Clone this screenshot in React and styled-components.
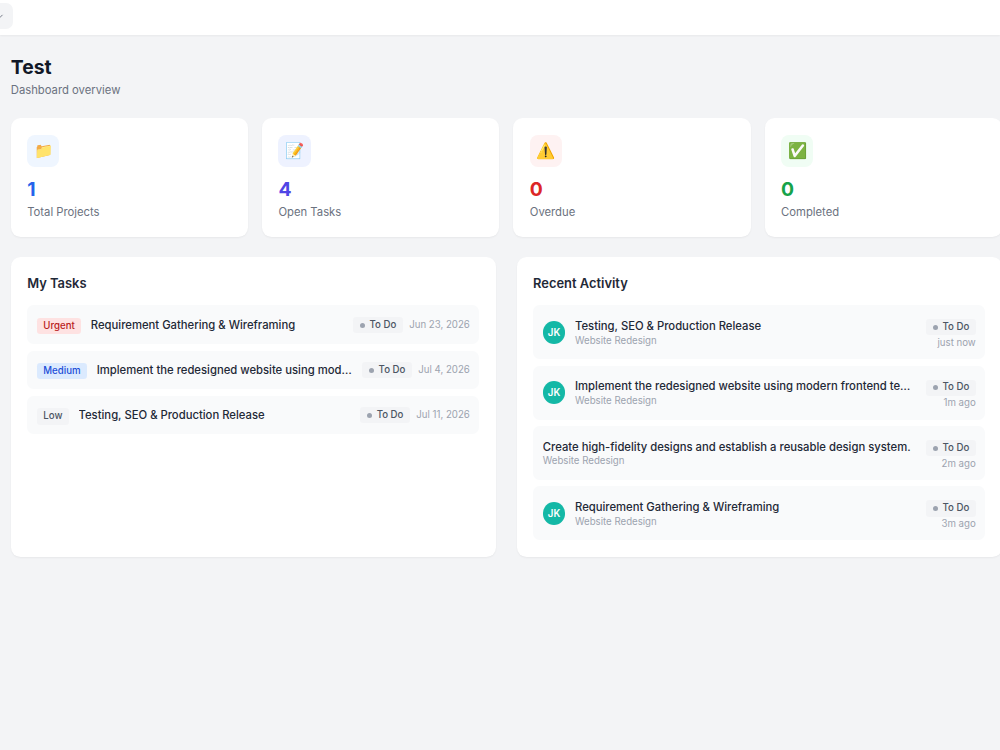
import React from "react"
import styled, { createGlobalStyle } from "styled-components"
import { ChevronDown } from "lucide-react"

const GlobalStyle = createGlobalStyle`
  *, *::before, *::after {
    box-sizing: border-box;
  }
  html {
    font-size: 12.9px;
  }
  body {
    margin: 0;
    height: 100vh;
    overflow: hidden;
    background: #f3f4f6;
    color: #1f2937;
    font-family: Inter, "Noto Sans", sans-serif;
  }
  h1, h2, p {
    margin: 0;
  }
`

const TopBar = styled.header`
  display: flex;
  align-items: flex-start;
  height: 35px;
  padding-top: 3px;
  background: #fff;
  box-shadow: 0 1px 2px rgba(0, 0, 0, 0.05);
`

const MenuButton = styled.button`
  display: flex;
  align-items: center;
  justify-content: flex-end;
  width: 40px;
  height: 26px;
  margin-left: -27px;
  padding: 0 8px 0 0;
  border: none;
  border-radius: 7px;
  background: #f3f4f6;
  color: #6b7280;
`

const Page = styled.main`
  width: 991px;
  margin-left: 10.8px;
  padding-top: 20.6px;
`

const PageTitle = styled.h1`
  color: #111827;
  font-size: 1.5rem;
  font-weight: 700;
  line-height: 1.8rem;
`

const PageSubtitle = styled.p`
  margin-top: 0.25rem;
  color: #6b7280;
  font-size: 0.875rem;
  line-height: 1.3rem;
`

const StatGrid = styled.section`
  display: grid;
  grid-template-columns: repeat(4, 1fr);
  gap: 1.1rem;
  margin: 1.51rem 0 1.6rem;
`

const Card = styled.div`
  min-width: 0;
  padding: 1.27rem;
  border-radius: 0.75rem;
  background: #fff;
  box-shadow: 0 1px 2px rgba(0, 0, 0, 0.05);
`

const StatIcon = styled.div`
  display: flex;
  align-items: center;
  justify-content: center;
  width: 2.5rem;
  height: 2.5rem;
  margin-bottom: 0.83rem;
  border-radius: 0.625rem;
  background: ${props => props.$background};
  font-size: 1.2rem;
  line-height: 1;
`

const StatValue = styled.p`
  color: ${props => props.$color};
  font-size: 1.5rem;
  font-weight: 700;
  line-height: 1.8rem;
`

const StatLabel = styled.p`
  margin-top: 0.25rem;
  margin-bottom: -0.05rem;
  color: #6b7280;
  font-size: 0.875rem;
  line-height: 1.3rem;
`

const PanelGrid = styled.section`
  display: grid;
  grid-template-columns: 1fr 1fr;
  gap: 1.62rem;
`

const PanelTitle = styled.h2`
  margin-bottom: 0.89rem;
  font-size: 1rem;
  font-weight: 600;
  line-height: 1.58rem;
`

const List = styled.div`
  display: flex;
  flex-direction: column;
  gap: 0.5rem;
`

const Row = styled.div`
  display: flex;
  align-items: center;
  gap: 0.75rem;
  height: ${props => (props.$tall ? "4.18rem" : "3rem")};
  padding: 0 0.75rem;
  border-radius: 0.5rem;
  background: #f9fafb;
`

const priorities = {
  Urgent: { background: "#fee2e2", color: "#b91c1c" },
  Medium: { background: "#dbeafe", color: "#1d4ed8" },
  Low: { background: "#f3f4f6", color: "#4b5563" },
}

const PriorityTag = styled.span`
  flex-shrink: 0;
  margin-top: 3px;
  padding: 0.125rem 0.5rem;
  border-radius: 0.25rem;
  background: ${props => priorities[props.$level].background};
  color: ${props => priorities[props.$level].color};
  font-size: 0.75rem;
  font-weight: 500;
  line-height: 1rem;
`

const ItemTitle = styled.p`
  overflow: hidden;
  font-size: 0.875rem;
  font-weight: 500;
  line-height: 1.3rem;
  text-overflow: ellipsis;
  white-space: nowrap;
`

const TaskTitle = styled(ItemTitle)`
  flex: 1;
  padding-top: 0.5px;
`

const TaskMeta = styled.div`
  display: flex;
  flex-shrink: 0;
  align-items: center;
  gap: 0.5rem;
  padding-top: 0.7px;
`

const Badge = styled.span`
  display: inline-flex;
  align-items: center;
  gap: 0.375rem;
  padding: 0.125rem 0.5rem;
  border-radius: 0.25rem;
  background: #f3f4f6;
  color: #4b5563;
  font-size: 0.75rem;
  font-weight: 500;
  line-height: 1rem;
`

const Dot = styled.span`
  width: 5px;
  height: 5px;
  border-radius: 50%;
  background: #9ca3af;
`

const Muted = styled.p`
  color: #9ca3af;
  font-size: 0.75rem;
  line-height: 1rem;
`

const Avatar = styled.div`
  display: flex;
  flex-shrink: 0;
  align-items: center;
  justify-content: center;
  width: 1.75rem;
  height: 1.75rem;
  border-radius: 50%;
  background: #14b8a6;
  color: #fff;
  font-size: 0.75rem;
  font-weight: 600;
`

const ActivityText = styled.div`
  flex: 1;
  min-width: 0;
  padding-top: 1px;
`

const ActivityMeta = styled.div`
  display: flex;
  flex-direction: column;
  flex-shrink: 0;
  align-items: flex-end;
  gap: 1.5px;
  margin-left: 3px;
  padding-top: 4.5px;
`

const stats = [
  { icon: "📁", value: 1, label: "Total Projects", color: "#2563eb", background: "#eff6ff" },
  { icon: "📝", value: 4, label: "Open Tasks", color: "#4f46e5", background: "#eef2ff" },
  { icon: "⚠️", value: 0, label: "Overdue", color: "#dc2626", background: "#fef2f2" },
  { icon: "✅", value: 0, label: "Completed", color: "#16a34a", background: "#f0fdf4" },
]

const tasks = [
  { priority: "Urgent", title: "Requirement Gathering & Wireframing", due: "Jun 23, 2026" },
  {
    priority: "Medium",
    title: "Implement the redesigned website using modern frontend technologies.",
    due: "Jul 4, 2026",
  },
  { priority: "Low", title: "Testing, SEO & Production Release", due: "Jul 11, 2026" },
]

const activity = [
  { user: "JK", title: "Testing, SEO & Production Release", time: "just now" },
  {
    user: "JK",
    title: "Implement the redesigned website using modern frontend technologies.",
    time: "1m ago",
  },
  {
    title: "Create high-fidelity designs and establish a reusable design system.",
    time: "2m ago",
  },
  { user: "JK", title: "Requirement Gathering & Wireframing", time: "3m ago" },
]

const StatusBadge = () => (
  <Badge>
    <Dot />
    To Do
  </Badge>
)

const StatCard = ({ icon, value, label, color, background }) => (
  <Card>
    <StatIcon $background={background}>{icon}</StatIcon>
    <StatValue $color={color}>{value}</StatValue>
    <StatLabel>{label}</StatLabel>
  </Card>
)

const TaskRow = ({ priority, title, due }) => (
  <Row>
    <PriorityTag $level={priority}>{priority}</PriorityTag>
    <TaskTitle>{title}</TaskTitle>
    <TaskMeta>
      <StatusBadge />
      <Muted>{due}</Muted>
    </TaskMeta>
  </Row>
)

const ActivityRow = ({ user, title, time }) => (
  <Row $tall>
    {user && <Avatar>{user}</Avatar>}
    <ActivityText>
      <ItemTitle>{title}</ItemTitle>
      <Muted>Website Redesign</Muted>
    </ActivityText>
    <ActivityMeta>
      <StatusBadge />
      <Muted>{time}</Muted>
    </ActivityMeta>
  </Row>
)

const App = () => {
  return (
    <>
      <GlobalStyle />
      <TopBar>
        <MenuButton aria-label="Open menu">
          <ChevronDown size={11} />
        </MenuButton>
      </TopBar>
      <Page>
        <PageTitle>Test</PageTitle>
        <PageSubtitle>Dashboard overview</PageSubtitle>
        <StatGrid>
          {stats.map(stat => (
            <StatCard key={stat.label} {...stat} />
          ))}
        </StatGrid>
        <PanelGrid>
          <Card>
            <PanelTitle>My Tasks</PanelTitle>
            <List>
              {tasks.map(task => (
                <TaskRow key={task.title} {...task} />
              ))}
            </List>
          </Card>
          <Card>
            <PanelTitle>Recent Activity</PanelTitle>
            <List>
              {activity.map(item => (
                <ActivityRow key={item.title} {...item} />
              ))}
            </List>
          </Card>
        </PanelGrid>
      </Page>
    </>
  )
}

export default App
